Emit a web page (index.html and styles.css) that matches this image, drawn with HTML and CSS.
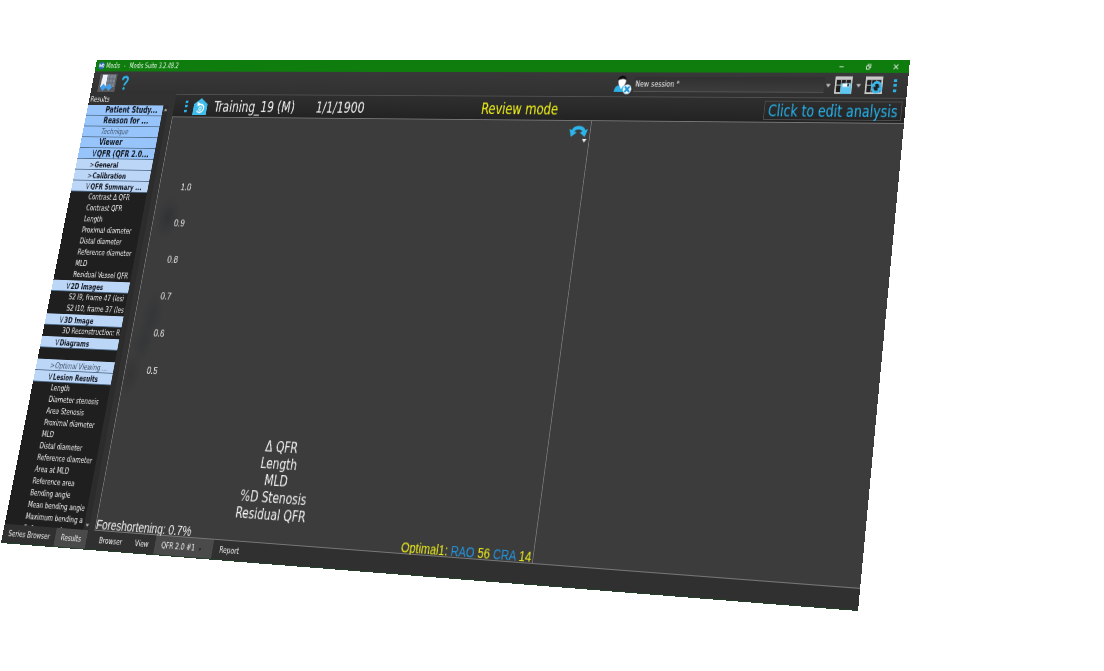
FILE: index.html
```html
<!DOCTYPE html>
<html lang="en">
<head>
<meta charset="utf-8">
<title>Medis Suite 3.2.48.2</title>
<link rel="stylesheet" href="styles.css">
</head>
<body>
<div class="window">
  <header class="titlebar">
    <svg class="app-icon" viewBox="0 0 10 10" aria-hidden="true"><circle cx="5" cy="5" r="4.6" fill="#2f62b8"/><path d="M2 7V3.4l2 2.4L6 3v4M7.4 3a3 3 0 0 1 0 4.4" fill="none" stroke="#e8f1ff" stroke-width="1.2"/></svg>
    <span>Medis</span><span class="dash">-</span><span>Medis Suite 3.2.48.2</span>
    <div class="controls">
      <button aria-label="Minimize"><svg viewBox="0 0 8 8"><path d="M1 4h6"/></svg></button>
      <button aria-label="Restore"><svg viewBox="0 0 8 8"><path d="M1 3h4v4H1zM3 3V1h4v4H5"/></svg></button>
      <button aria-label="Close"><svg viewBox="0 0 8 8"><path d="M1 1l6 6M7 1L1 7"/></svg></button>
    </div>
  </header>

  <div class="toolbar">
    <button class="tool tool-on" aria-label="Layout">
      <svg viewBox="0 0 26 22"><path d="M4 1h7v15H3z" fill="#eef2f8"/><path d="M11 1h13v15H11z" fill="#7f8694"/><path d="M11 6h13M11 11h13M15 1v15M20 1v15" stroke="#5f6674" stroke-width="1"/><path d="M3 16.500L7.500 12l4.500 4.500L7.500 21zM12 16.500l4.500-4.500 4.500 4.500-4.500 4.500z" fill="#3d9ff0"/><path d="M7 16.500h10" stroke="#3d9ff0" stroke-width="2"/></svg>
    </button>
    <button class="tool help" aria-label="Help"><svg viewBox="0 0 12 20"><path d="M2 6c0-5.500 8.500-5.500 8.500-.5 0 4-4.500 3.500-4.500 8" fill="none" stroke="#2cb5ea" stroke-width="3"/><circle cx="6" cy="17.500" r="1.900" fill="#2cb5ea"/></svg></button>
    <div class="session">
      <svg class="user" viewBox="0 0 24 22" aria-hidden="true"><path d="M1 19c0-6 4-8 9-8s9 2 9 8z" fill="#2cb0e6"/><path d="M7 11l3 5 3-5z" fill="#fff"/><ellipse cx="10.500" cy="7" rx="5" ry="6" fill="#fff"/><path d="M5 6c0-7 11-7 11 0-3-2-7-2-11 0z" fill="#0c0c0c"/><circle cx="18" cy="16" r="5.500" fill="#e8f6ff"/><path d="M15 13l6 6M21 13l-6 6" stroke="#1c93d4" stroke-width="2.400"/></svg>
      <select class="session-select" aria-label="Session"><option>New session *</option></select>
      <svg class="caret" viewBox="0 0 8 5" aria-hidden="true"><path d="M0 0h8L4 5z"/></svg>
    </div>
    <button class="tool grid-tool" aria-label="Save session">
      <svg viewBox="0 0 24 22"><rect x="1" y="1" width="22" height="20" fill="#c9c9c9"/><rect x="3" y="5" width="18" height="14" fill="#1f1f1f"/><path d="M3 11h18M9 4v15M15 4v15" stroke="#b5b5b5" stroke-width="1"/><rect x="9" y="9" width="13" height="12" fill="#5cc8f2"/><rect x="11" y="9" width="9" height="4" fill="#f4fbff"/><rect x="17" y="9.500" width="2" height="3" fill="#222"/></svg>
    </button>
    <svg class="caret" viewBox="0 0 8 5" aria-hidden="true"><path d="M0 0h8L4 5z"/></svg>
    <button class="tool grid-tool" aria-label="Reset layout">
      <svg viewBox="0 0 24 22"><rect x="1" y="1" width="22" height="20" fill="#c9c9c9"/><rect x="3" y="5" width="18" height="14" fill="#1f1f1f"/><path d="M3 11h7M9 4v15M15 4v3" stroke="#b5b5b5" stroke-width="1"/><path d="M20 13c1-6-7-7-8.500-2M10.500 14c0 6 7.500 6.500 9.500 1.500" fill="none" stroke="#3cb9ec" stroke-width="3"/><path d="M8 8l1 6 6-2zM23 18l-1-6-6 3z" fill="#3cb9ec"/></svg>
    </button>
    <button class="dots" aria-label="More options"><i></i><i></i><i></i></button>
  </div>

  <div class="body">
    <aside class="sidebar">
      <h2 class="side-title">Results</h2>
      <div class="side-scroll">
        <ul class="tree">
          <li class="top">Patient Study...</li>
          <li class="top">Reason for ...</li>
          <li class="top muted">Technique</li>
          <li class="top">Viewer</li>
          <li class="top"><button><span class="mark">V</span>QFR (QFR 2.0...</button></li>
          <li class="group"><button><span class="mark">&gt;</span>General</button></li>
          <li class="group"><button><span class="mark">&gt;</span>Calibration</button></li>
          <li class="group"><button><span class="mark">V</span>QFR Summary ...</button></li>
          <li>Contrast Δ QFR</li>
          <li>Contrast QFR</li>
          <li>Length</li>
          <li>Proximal diameter</li>
          <li>Distal diameter</li>
          <li>Reference diameter</li>
          <li>MLD</li>
          <li>Residual Vessel QFR</li>
          <li class="group"><button><span class="mark">V</span>2D Images</button></li>
          <li>S2 I9, frame 47 (lesi</li>
          <li>S2 I10, frame 37 (les</li>
          <li class="group"><button><span class="mark">V</span>3D Image</button></li>
          <li>3D Reconstruction: R</li>
          <li class="group"><button><span class="mark">V</span>Diagrams</button></li>
          <li></li>
          <li class="group muted"><button><span class="mark">&gt;</span>Optimal Viewing ...</button></li>
          <li class="group"><button><span class="mark">V</span>Lesion Results</button></li>
          <li>Length</li>
          <li>Diameter stenosis</li>
          <li>Area Stenosis</li>
          <li>Proximal diameter</li>
          <li>MLD</li>
          <li>Distal diameter</li>
          <li>Reference diameter</li>
          <li>Area at MLD</li>
          <li>Reference area</li>
          <li>Bending angle</li>
          <li>Mean bending angle</li>
          <li>Maximum bending a</li>
          <li>Reference volume</li>
        </ul>
        <div class="scrollbar" aria-hidden="true">
          <svg class="caret" viewBox="0 0 8 5"><path d="M0 5h8L4 0z"/></svg>
          <svg class="caret" viewBox="0 0 8 5"><path d="M0 0h8L4 5z"/></svg>
        </div>
      </div>
    </aside>

    <main class="main">
      <div class="study">
        <div class="study-left">
          <button class="dots small" aria-label="Study menu"><i></i><i></i><i></i></button>
          <svg class="house" viewBox="0 0 22 20" aria-hidden="true"><path d="M11 0L1 7v13h20V7z" fill="#3fbdec"/><path d="M8 8.500c4-2.500 8.500 0 8 4s-6 6-9.500 2.500" fill="none" stroke="#fff" stroke-width="1.700"/><circle cx="11" cy="12.500" r="1.800" fill="none" stroke="#fff" stroke-width="1.300"/><path d="M5.500 4.500l5 2-3.500 4z" fill="#fff"/></svg>
          <span>Training_19 (M)</span>
          <span class="date">1/1/1900</span>
        </div>
        <span class="mode">Review mode</span>
        <div class="study-right"><button class="edit">Click to edit analysis</button></div>
      </div>

      <div class="views">
        <section class="view view-graph">
          <button class="rotate" aria-label="Rotate view">
            <svg viewBox="0 0 24 20"><path d="M4 9C6 1.500 18 1.500 20 9" fill="none" stroke="#2cb5ea" stroke-width="4"/><path d="M0 5l10 4-7 5zM24 5l-10 4 7 5z" fill="#2cb5ea"/><path d="M18 16h6l-3 4z" fill="#f0f0f0"/></svg>
          </button>
          <ol class="axis">
            <li>1.0</li><li>0.9</li><li>0.8</li><li>0.7</li><li>0.6</li><li>0.5</li>
          </ol>
          <ul class="legend">
            <li>Δ QFR</li><li>Length</li><li>MLD</li><li>%D Stenosis</li><li>Residual QFR</li>
          </ul>
          <div class="readout">
            <span>Foreshortening: 0.7%</span>
            <span class="angle">Optimal1: <b>RAO</b> 56 <b>CRA</b> 14</span>
          </div>
        </section>
        <section class="view view-empty"></section>
      </div>
    </main>
  </div>

  <footer class="tabs">
    <nav class="side-tabs"><button>Series Browser</button><button class="on">Results</button></nav>
    <nav class="main-tabs"><button>Browser</button><button>View</button><button class="on">QFR 2.0 #1<span class="pin">▾</span></button><button>Report</button></nav>
  </footer>
</div>
</body>
</html>
```
FILE: styles.css
```css
* { box-sizing: border-box; }

body {
  min-height: 100vh;
  margin: 0;
  background: #fff;
  font-family: "DejaVu Sans Condensed", "DejaVu Sans", Tahoma, sans-serif;
  font-size: 9px;
  color: #f0f0f0;
}

ul, ol { list-style: none; margin: 0; padding: 0; }

button {
  display: inline-flex;
  align-items: center;
  padding: 0;
  border: 0;
  background: none;
  color: inherit;
  font: inherit;
}

/* The application window is shown as a tilted sheet in perspective. */
.window {
  display: flex;
  flex-direction: column;
  height: calc(100vh - 111px);
  background: #333;
  transform-origin: 0 0;
  transform: matrix3d(0.640628, -0.00631555, 0, -0.000105259, -0.171533, 0.80588, 0, -0.000104273, 0, 0, 1, 0, 97, 60, 0, 1);
}

.titlebar {
  display: flex;
  align-items: center;
  height: 14px;
  padding-left: 4px;
  background: #0e7d0e;
  color: #e4f2e4;
  font-size: 8px;
}
.app-icon { width: 10px; height: 10px; margin-right: 2px; }
.dash { padding: 0 6px; }
.controls { display: flex; margin-left: auto; }
.controls button { width: 33px; height: 14px; justify-content: center; }
.controls svg { width: 8px; height: 7px; fill: none; stroke: #f0f0f0; stroke-width: 1; }

.toolbar {
  display: flex;
  align-items: center;
  gap: 4px;
  height: 27px;
  padding: 0 5px 0 10px;
  background: linear-gradient(#383838, #313131);
}
.tool { width: 26px; height: 22px; }
.tool svg { width: 26px; height: 22px; }
.tool-on { background: #59595c; }
.grid-tool, .grid-tool svg { width: 23px; height: 21px; }
.help { width: 18px; justify-content: center; }
.help svg { width: 12px; height: 18px; }
.session { display: flex; align-items: center; gap: 2px; width: 274px; margin-left: auto; }
.user { flex: none; width: 24px; height: 22px; }
.session-select {
  flex: 1;
  min-width: 0;
  height: 17px;
  padding: 0 2px;
  border: 0;
  border-bottom: 1px solid #555;
  background: linear-gradient(#303030, #3c3c3c);
  color: #f0f0f0;
  font: inherit;
  appearance: none;
}
.caret { flex: none; width: 6px; height: 4px; fill: #bdbdbd; }
.dots {
  flex-direction: column;
  justify-content: space-between;
  width: 20px;
  height: 14px;
}
.dots i { width: 4px; height: 3px; background: #2cb0e6; }
.dots.small { width: 8px; margin-left: 10px; }

.body { display: flex; flex: 1; min-height: 0; }

.sidebar {
  display: flex;
  flex-direction: column;
  flex: none;
  width: 130px;
  background: #323232;
}
.side-title {
  margin: 0;
  padding-left: 2px;
  font-size: 9px;
  font-weight: normal;
  line-height: 14px;
}
.side-scroll { display: flex; flex: 1; min-height: 0; }
.tree {
  width: 114px;
  overflow: hidden;
  background: #1f1f1f;
}
.tree li {
  height: 13px;
  padding-left: 28px;
  overflow: hidden;
  line-height: 12px;
  white-space: nowrap;
}
.tree .top, .tree .group {
  border-bottom: 1px solid #53708f;
  background: #bcd6f7;
  color: #10141c;
  font-weight: bold;
}
.tree .top { background: #97c4fa; font-size: 10px; }
.tree .muted { color: #3f5068; font-size: 9px; font-style: italic; font-weight: normal; }
.tree button { height: 13px; margin-left: -8px; vertical-align: top; }
.mark { width: 8px; font-weight: normal; }
.scrollbar {
  display: flex;
  flex-direction: column;
  justify-content: space-between;
  align-items: center;
  width: 8px;
  padding: 3px 0;
  background: #2c2c2c;
}
.scrollbar .caret { width: 5px; height: 4px; }

.main { display: flex; flex: 1; flex-direction: column; min-width: 0; }

.study {
  display: grid;
  grid-template-columns: 1fr auto 1fr;
  align-items: center;
  height: 27px;
  padding: 1px 4px 0;
  border-top: 1px solid #505050;
  background: linear-gradient(#2f2f2f, #232323);
  font-size: 17px;
  white-space: nowrap;
}
.study-left { display: flex; align-items: center; }
.house { width: 22px; height: 20px; margin: 0 9px 0 6px; }
.date { margin-left: 30px; }
.mode { color: #f4f418; }
.study-right { display: flex; justify-content: flex-end; }
.edit {
  height: 21px;
  padding: 1px 4px 0;
  border: 1px solid #4c4c4c;
  color: #25b4ee;
}

.views { display: grid; flex: 1; grid-template-columns: 3fr 2fr; min-height: 0; }
.view {
  border: 1px solid #777;
  border-width: 1px 0 1px 1px;
  background: #3c3c3c;
}
.view-graph {
  display: flex;
  flex-direction: column;
  background:
    radial-gradient(ellipse 18px 24px at 20px 118px, #303336, transparent),
    radial-gradient(ellipse 15px 28px at 24px 231px, #343638, transparent),
    radial-gradient(ellipse 15px 24px at 18px 260px, #343638, transparent),
    radial-gradient(ellipse 15px 24px at 8px 298px, #353535, transparent),
    #3c3c3c;
}
.rotate { align-self: flex-end; margin: 2px 3px 0 0; }
.rotate svg { width: 24px; height: 24px; }
.axis {
  margin: 35px 0 0 31px;
  font-family: "Liberation Sans", Arial, sans-serif;
  font-size: 11px;
  line-height: 42px;
}
.legend {
  width: 120px;
  margin: 46px 0 0 177px;
  font-size: 16px;
  line-height: 18px;
  text-align: center;
}
.readout {
  display: flex;
  justify-content: space-between;
  margin-top: auto;
  padding: 0 2px 0 0;
  font-family: "Liberation Sans", Arial, sans-serif;
  font-size: 14px;
  line-height: 11px;
}
.angle { color: #eded1c; }
.angle b { color: #2494dc; font-weight: normal; }

.tabs { display: flex; height: 21px; background: #303030; border-bottom: 1px solid #24402a; }
.tabs nav { display: flex; }
.tabs button { padding: 0 8px; }
.side-tabs { width: 130px; }
.tabs .on { background: #4a4a4a; }
.main-tabs button { padding: 0 9px; }
.main-tabs .on { padding-right: 16px; }
.pin { padding-left: 6px; font-size: 6px; color: #1c1c1c; }
```
